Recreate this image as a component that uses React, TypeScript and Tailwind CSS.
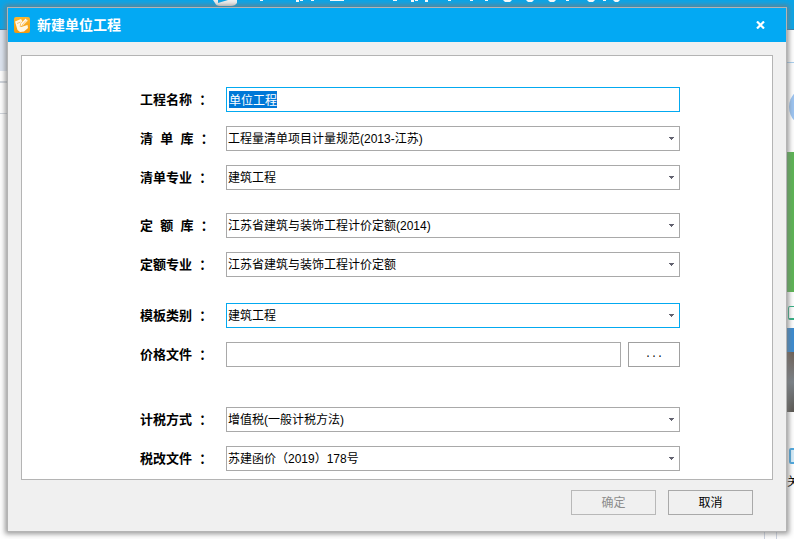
import { useEffect, useRef, useState } from "react";
import type { ReactNode } from "react";

type SelectField = {
  id: string;
  label: string;
  options: string[];
  active?: boolean;
};

const listFields: SelectField[] = [
  {
    id: "list-library",
    label: "清\u00a0\u00a0单\u00a0\u00a0库",
    options: ["工程量清单项目计量规范(2013-江苏)"],
  },
  { id: "list-major", label: "清单专业", options: ["建筑工程"] },
];

const quotaFields: SelectField[] = [
  {
    id: "quota-library",
    label: "定\u00a0\u00a0额\u00a0\u00a0库",
    options: ["江苏省建筑与装饰工程计价定额(2014)"],
  },
  { id: "quota-major", label: "定额专业", options: ["江苏省建筑与装饰工程计价定额"] },
];

const templateFields: SelectField[] = [
  { id: "template", label: "模板类别", options: ["建筑工程"], active: true },
];

const taxFields: SelectField[] = [
  { id: "tax-method", label: "计税方式", options: ["增值税(一般计税方法)"] },
  { id: "tax-file", label: "税改文件", options: ["苏建函价（2019）178号"] },
];

function Row({ id, label, children }: { id: string; label: string; children: ReactNode }) {
  return (
    <div className="flex items-center">
      <label htmlFor={id} className="w-[86px] shrink-0 whitespace-nowrap text-[13px] leading-5 font-bold">
        {label}&nbsp;&nbsp;：
      </label>
      {children}
    </div>
  );
}

function SelectRow({ field }: { field: SelectField }) {
  return (
    <Row id={field.id} label={field.label}>
      <div className="relative flex-1">
        <select
          id={field.id}
          className={`block h-[25px] w-full appearance-none border bg-white px-px text-xs outline-none ${
            field.active ? "border-[#03a9f0]" : "border-[#a9a9a9]"
          }`}
        >
          {field.options.map((option) => (
            <option key={option}>{option}</option>
          ))}
        </select>
        <svg
          className="pointer-events-none absolute top-[11px] right-[6px]"
          width="5"
          height="3"
          viewBox="0 0 5 3"
          shapeRendering="crispEdges"
          fill="#62626f"
        >
          <path d="M0 0h5v1H0zM1 1h3v1H1zM2 2h1v1H2z" />
        </svg>
      </div>
    </Row>
  );
}

function AppIcon() {
  return (
    <svg width="16" height="16" viewBox="0 0 16 16">
      <defs>
        <linearGradient id="icon-fill" x1="0" y1="0" x2="0" y2="1">
          <stop offset="0" stopColor="#fbb62e" />
          <stop offset="1" stopColor="#f39a10" />
        </linearGradient>
      </defs>
      <rect width="16" height="16" rx="2" fill="url(#icon-fill)" />
      <path d="M1 4.500L7 2l1.500 2.500L6 8l1 2 6.500-2 .5 3-4 3.500-4 .5-2.500-2z" fill="#fff6e4" />
      <path d="M6 9.500l.8-3L11.500 1.500l2.500 2-5 5z" fill="#fff" stroke="#f7ae35" strokeWidth=".6" />
      <path d="M3 6.500l3.500-1.500M8 8l4-4.500" stroke="#f6b04a" strokeWidth=".7" fill="none" />
    </svg>
  );
}

// The application window that shows round the edges of the dialog.
function Backdrop() {
  return (
    <div aria-hidden="true" className="absolute inset-0 flex flex-col overflow-hidden">
      <div className="h-[30px] shrink-0 border-b border-[#3a7fa8] bg-[#0ba5e8]">
        <svg className="ml-[213px]" width="412" height="6" viewBox="0 0 412 6">
          <path d="M0 0h24v3q-2 3-6 3H7Q3 6 2 3z" fill="#f2f2f2" />
          <path d="M5 0h10L5 3z" fill="#0ba5e8" />
          <path
            d="M47 0h3v1h-3zM83 0h3v2h-3zM87 0h3v1h-3zM98 0h3v1h-3zM117 0h14v1h-14zM180 0h4v1h-4zM198 0h3v2h-3zM202 0h3v1h-3zM212 0h3v2h-3zM235 0h3v1h-3zM257 0h3v1h-3zM272 0h3v1h-3zM290 0h9l-2 2h-5zM313 0h8l-2 2h-4zM335 0h8l-2 2h-4zM353 0h3v1h-3zM374 0h8l-2 2h-4zM390 0h3v1h-3zM400 0h7l-2 2h-3z"
            fill="#fff"
          />
        </svg>
      </div>
      <div className="flex flex-1 justify-between">
        <div className="w-2">
          <div className="h-[41px] bg-[#dde5f0]" />
          <div className="h-3 border-b-2 border-[#d0d5dc]" />
          <div className="h-[31px] border-b border-[#d0d5dc]" />
        </div>
        <div className="w-[7px] overflow-hidden">
          <div className="h-[33px] border-b border-[#a9d0f0]" />
          <div className="mt-6 mb-[25px] ml-0.5 size-10 rounded-full bg-[#9cc5f3]" />
          <div className="h-[140px] bg-[#5cb554]" />
          <div className="mt-3.5 mb-2 ml-px h-3.5 w-4 rounded-xs border border-b-2 border-[#31b083]" />
          <div className="h-6 bg-[#3b8bd0]" />
          <div className="h-[60px] bg-linear-to-b from-[#6f6258] via-[#7b8289] to-[#5a5752]" />
          <div className="mt-9 ml-0.5 h-4 w-4 rounded-xs border-2 border-[#4da9e0] bg-[#d7eefb]" />
          <div className="mt-2 w-4 text-xs leading-5">关</div>
        </div>
      </div>
      <div className="mr-[17px] h-[7px] w-[13px] shrink-0 self-end border-x border-[#ccd3e0]" />
    </div>
  );
}

export default function App() {
  const [name, setName] = useState("单位工程");
  const [priceFile, setPriceFile] = useState("");
  const nameRef = useRef<HTMLInputElement>(null);

  useEffect(() => {
    nameRef.current?.focus();
    nameRef.current?.select();
  }, []);

  return (
    <main className="relative flex min-h-screen bg-white p-[7px] font-['Liberation_Sans','Noto_Sans_CJK_SC',sans-serif] text-black">
      <Backdrop />

      <form
        role="dialog"
        aria-labelledby="dialog-title"
        onSubmit={(e) => e.preventDefault()}
        className="relative flex flex-1 flex-col border border-[#b4b4b4] bg-[#f0f0f0] shadow-[0_0_5px_2px_rgba(120,120,120,0.75)]"
      >
        <header className="flex h-[34px] items-center gap-[7px] bg-[#03a9f3] pr-[21px] pl-1.5 text-white">
          <AppIcon />
          <h1 id="dialog-title" className="flex-1 text-[14px] leading-5 font-bold">
            新建单位工程
          </h1>
          <button type="button" aria-label="关闭">
            <svg width="9" height="8" viewBox="0 0 9 8" stroke="#fff" strokeWidth="2.200">
              <path d="M1 .5l7 7M8 .5l-7 7" />
            </svg>
          </button>
        </header>

        <section className="mx-[13px] mt-[13px] flex flex-1 flex-col border border-[#b4b4b4] bg-white pt-[31px] pr-[92px] pb-[7px] pl-[118px]">
          <div className="flex flex-col gap-3.5">
            <Row id="project-name" label="工程名称">
              <input
                id="project-name"
                ref={nameRef}
                value={name}
                onChange={(e) => setName(e.target.value)}
                className="h-[25px] min-w-0 flex-1 border border-[#03a9f0] bg-white px-0.5 text-xs leading-3 outline-none selection:bg-[#0078d7] selection:text-white"
              />
            </Row>
            {listFields.map((field) => (
              <SelectRow key={field.id} field={field} />
            ))}
          </div>

          <div className="mt-[23px] flex flex-col gap-3.5">
            {quotaFields.map((field) => (
              <SelectRow key={field.id} field={field} />
            ))}
          </div>

          <div className="mt-[26px] flex flex-col gap-3.5">
            {templateFields.map((field) => (
              <SelectRow key={field.id} field={field} />
            ))}
            <Row id="price-file" label="价格文件">
              <input
                id="price-file"
                value={priceFile}
                onChange={(e) => setPriceFile(e.target.value)}
                className="h-[25px] min-w-0 flex-1 border border-[#a9a9a9] bg-white px-0.5 text-xs outline-none"
              />
              <button
                type="button"
                lang="en"
                className="ml-[7px] h-[25px] w-[52px] border border-[#a0a0a0] bg-white font-['Liberation_Mono',monospace] text-[10px]"
              >
                ...
              </button>
            </Row>
          </div>

          <div className="mt-10 flex flex-col gap-3.5">
            {taxFields.map((field) => (
              <SelectRow key={field.id} field={field} />
            ))}
          </div>
        </section>

        <footer className="flex justify-end gap-3 pt-2.5 pr-[33px] pb-4 text-xs">
          <button type="submit" disabled className="h-[25px] w-[85px] border border-[#b8b8b8] text-[#8c8c8c]">
            确定
          </button>
          <button type="button" className="h-[25px] w-[85px] border border-[#a9a9a9] text-black">
            取消
          </button>
        </footer>
      </form>
    </main>
  );
}
